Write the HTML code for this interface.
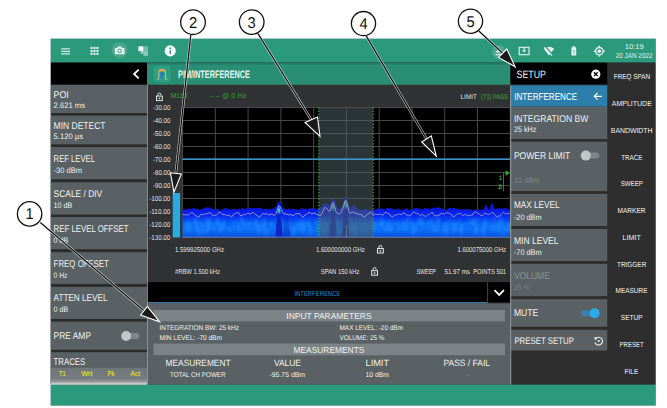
<!DOCTYPE html><html><head><meta charset="utf-8"><title>PIM/Interference</title><style>html,body{margin:0;padding:0;background:#fff}svg{display:block}</style></head><body><svg width="667" height="408" viewBox="0 0 667 408" font-family="Liberation Sans, sans-serif" text-rendering="geometricPrecision">
<defs>
<linearGradient id="gTitle" x1="0" y1="0" x2="0" y2="1"><stop offset="0" stop-color="#1f6e5b"/><stop offset="0.12" stop-color="#2a8e75"/><stop offset="1" stop-color="#2a8e75"/></linearGradient>
<linearGradient id="gTr" x1="0" y1="0" x2="0" y2="1"><stop offset="0" stop-color="#70777a"/><stop offset="0.62" stop-color="#757c7f"/><stop offset="0.8" stop-color="#8f9597"/><stop offset="1" stop-color="#e2e4e4"/></linearGradient>
<linearGradient id="gSpec" gradientUnits="userSpaceOnUse" x1="0" y1="196" x2="0" y2="238"><stop offset="0" stop-color="#0a14c8"/><stop offset="0.286" stop-color="#0818dc"/><stop offset="0.45" stop-color="#0a24ec"/><stop offset="0.55" stop-color="#0a44f4"/><stop offset="0.65" stop-color="#0c70fa"/><stop offset="0.81" stop-color="#0a6ef8"/><stop offset="0.98" stop-color="#0850e0"/></linearGradient>
<linearGradient id="gPeak" gradientUnits="userSpaceOnUse" x1="0" y1="196" x2="0" y2="238"><stop offset="0" stop-color="#1030d8"/><stop offset="0.2" stop-color="#30d0c0"/><stop offset="0.4" stop-color="#1a60e0"/><stop offset="1" stop-color="#0a20c0"/></linearGradient>
<filter id="fBlur" x="-5%" y="-20%" width="110%" height="140%"><feGaussianBlur stdDeviation="1.1 1.6"/></filter>
<filter id="fBlur2" x="-5%" y="-20%" width="110%" height="140%"><feGaussianBlur stdDeviation="0.7 0.8"/></filter>
<linearGradient id="gArch" x1="0" y1="0" x2="0" y2="1"><stop offset="0" stop-color="#2a6cc4"/><stop offset="1" stop-color="#2a96a4"/></linearGradient>
<clipPath id="cpPlot"><rect x="182.3" y="107.5" width="328.2" height="130"/></clipPath>
</defs>
<rect x="0.00" y="0.00" width="667.00" height="408.00" fill="#fff" />
<rect x="50.80" y="38.80" width="604.70" height="366.60" fill="#313233" />
<rect x="50.80" y="38.80" width="604.70" height="23.80" fill="#2a997c" />
<rect x="50.80" y="384.40" width="604.70" height="21.00" fill="#2a997c" />
<rect x="50.80" y="62.60" width="96.20" height="22.00" fill="#000" />
<rect x="50.80" y="84.60" width="96.20" height="299.80" fill="#2a2d2e" />
<rect x="50.80" y="85.00" width="96.20" height="28.00" fill="#596164" />
<text x="53.60" y="98.00" font-size="9.74" textLength="15.20" lengthAdjust="spacingAndGlyphs" fill="#f2f2f2" font-weight="normal" >POI</text>
<text x="53.60" y="108.00" font-size="7.99" textLength="31.40" lengthAdjust="spacingAndGlyphs" fill="#f2f2f2" font-weight="normal" >2.621 ms</text>
<rect x="50.80" y="115.60" width="96.20" height="28.70" fill="#596164" />
<text x="53.60" y="129.00" font-size="9.74" textLength="51.90" lengthAdjust="spacingAndGlyphs" fill="#f2f2f2" font-weight="normal" >MIN DETECT</text>
<text x="53.60" y="139.00" font-size="7.99" textLength="29.40" lengthAdjust="spacingAndGlyphs" fill="#f2f2f2" font-weight="normal" >5.120 µs</text>
<rect x="50.80" y="147.00" width="96.20" height="32.30" fill="#596164" />
<text x="53.60" y="162.00" font-size="9.74" textLength="41.40" lengthAdjust="spacingAndGlyphs" fill="#f2f2f2" font-weight="normal" >REF LEVEL</text>
<text x="53.60" y="173.00" font-size="7.99" textLength="28.40" lengthAdjust="spacingAndGlyphs" fill="#f2f2f2" font-weight="normal" >-30 dBm</text>
<rect x="50.80" y="182.30" width="96.20" height="32.20" fill="#596164" />
<text x="53.60" y="197.00" font-size="9.74" textLength="48.60" lengthAdjust="spacingAndGlyphs" fill="#f2f2f2" font-weight="normal" >SCALE / DIV</text>
<text x="53.60" y="208.00" font-size="7.99" textLength="18.70" lengthAdjust="spacingAndGlyphs" fill="#f2f2f2" font-weight="normal" >10 dB</text>
<rect x="50.80" y="217.00" width="96.20" height="32.20" fill="#596164" />
<text x="53.60" y="232.00" font-size="9.74" textLength="74.90" lengthAdjust="spacingAndGlyphs" fill="#f2f2f2" font-weight="normal" >REF LEVEL OFFSET</text>
<text x="53.60" y="243.00" font-size="7.99" textLength="14.60" lengthAdjust="spacingAndGlyphs" fill="#f2f2f2" font-weight="normal" >0 dB</text>
<rect x="50.80" y="252.20" width="96.20" height="31.70" fill="#596164" />
<text x="53.60" y="267.00" font-size="9.74" textLength="55.10" lengthAdjust="spacingAndGlyphs" fill="#f2f2f2" font-weight="normal" >FREQ OFFSET</text>
<text x="53.60" y="278.00" font-size="7.99" textLength="13.80" lengthAdjust="spacingAndGlyphs" fill="#f2f2f2" font-weight="normal" >0 Hz</text>
<rect x="50.80" y="286.90" width="96.20" height="32.00" fill="#596164" />
<text x="53.60" y="301.00" font-size="9.74" textLength="53.90" lengthAdjust="spacingAndGlyphs" fill="#f2f2f2" font-weight="normal" >ATTEN LEVEL</text>
<text x="53.60" y="312.00" font-size="7.99" textLength="14.60" lengthAdjust="spacingAndGlyphs" fill="#f2f2f2" font-weight="normal" >0 dB</text>
<rect x="50.80" y="321.60" width="96.20" height="28.20" fill="#596164" />
<text x="53.60" y="339.00" font-size="9.74" textLength="37.40" lengthAdjust="spacingAndGlyphs" fill="#f2f2f2" font-weight="normal" >PRE AMP</text>
<rect x="125.00" y="333.00" width="14.50" height="6.00" fill="#7f8689" rx="3"/>
<circle cx="126.2" cy="336" r="5" fill="#c2c6c7"/>
<rect x="50.80" y="352.20" width="96.20" height="32.20" fill="#596164" />
<rect x="50.80" y="367.80" width="96.20" height="16.90" fill="url(#gTr)" />
<text x="53.60" y="365.00" font-size="9.74" textLength="31.60" lengthAdjust="spacingAndGlyphs" fill="#f2f2f2" font-weight="normal" >TRACES</text>
<text x="59.00" y="376.00" font-size="7.12" textLength="6.80" lengthAdjust="spacingAndGlyphs" fill="#dcdc28" font-weight="normal" stroke="#dcdc28" stroke-width="0.2">T1</text>
<text x="81.20" y="376.00" font-size="7.12" textLength="11.30" lengthAdjust="spacingAndGlyphs" fill="#dcdc28" font-weight="normal" stroke="#dcdc28" stroke-width="0.2">Wrt</text>
<text x="107.50" y="376.00" font-size="7.12" textLength="7.20" lengthAdjust="spacingAndGlyphs" fill="#dcdc28" font-weight="normal" stroke="#dcdc28" stroke-width="0.2">Pk</text>
<text x="130.50" y="376.00" font-size="7.12" textLength="9.70" lengthAdjust="spacingAndGlyphs" fill="#dcdc28" font-weight="normal" stroke="#dcdc28" stroke-width="0.2">Act</text>
<path d="M138.7 69.7 L134.1 74 L138.7 78.3" fill="none" stroke="#fff" stroke-width="1.8" stroke-linejoin="miter"/>
<rect x="61.20" y="48.35" width="8.80" height="1.10" fill="#e6f4ef" />
<rect x="61.20" y="50.85" width="8.80" height="1.10" fill="#e6f4ef" />
<rect x="61.20" y="53.35" width="8.80" height="1.10" fill="#e6f4ef" />
<rect x="90.50" y="46.90" width="2.10" height="2.10" fill="#e6f4ef" />
<rect x="90.50" y="49.85" width="2.10" height="2.10" fill="#e6f4ef" />
<rect x="90.50" y="52.80" width="2.10" height="2.10" fill="#e6f4ef" />
<rect x="93.45" y="46.90" width="2.10" height="2.10" fill="#e6f4ef" />
<rect x="93.45" y="49.85" width="2.10" height="2.10" fill="#e6f4ef" />
<rect x="93.45" y="52.80" width="2.10" height="2.10" fill="#e6f4ef" />
<rect x="96.40" y="46.90" width="2.10" height="2.10" fill="#e6f4ef" />
<rect x="96.40" y="49.85" width="2.10" height="2.10" fill="#e6f4ef" />
<rect x="96.40" y="52.80" width="2.10" height="2.10" fill="#e6f4ef" />
<circle cx="119.6" cy="50.2" r="8" fill="#ffffff" fill-opacity="0.14"/>
<path d="M114.8 48 h2.3 l0.9 -1.4 h3.3 l0.9 1.4 h2.3 v6.3 h-9.7 z" fill="#e6f4ef"/>
<circle cx="119.65" cy="50.9" r="1.8" fill="none" stroke="#2a997c" stroke-width="0.9"/>
<rect x="138.40" y="46.30" width="5.00" height="4.90" fill="#f6fcfa" />
<rect x="143.40" y="46.30" width="4.60" height="4.90" fill="#ffffff" fill-opacity="0.35"/>
<rect x="143.40" y="51.20" width="4.60" height="4.70" fill="#ffffff" fill-opacity="0.45"/>
<rect x="140.80" y="51.20" width="2.60" height="2.50" fill="#ffffff" fill-opacity="0.6"/>
<circle cx="170.2" cy="50.9" r="5.6" fill="#fafdfc"/>
<rect x="169.50" y="50.20" width="1.50" height="3.70" fill="#2a997c" />
<circle cx="170.25" cy="48.2" r="0.9" fill="#2a997c"/>
<circle cx="499" cy="52" r="7" fill="#ffffff" fill-opacity="0.15"/>
<path d="M495.5 52.5 l3.5 -4 l3.5 4 z M495.5 54 h7 v1.3 h-7z" fill="#e6f4ef"/>
<rect x="519.2" y="47.3" width="9.8" height="7.4" fill="none" stroke="#e6f4ef" stroke-width="1.1"/>
<path d="M523.6 47.3 h1.2 v3 h1.4 l-2 2.2 l-2 -2.2 h1.4 z" fill="#e6f4ef"/>
<path d="M543.8 48.8 q5.2 -4 10.4 0 l-5.2 6.8 z" fill="#e6f4ef"/>
<path d="M545.4 46.4 l7.4 8.4" stroke="#2a997c" stroke-width="1.4"/><path d="M544.4 47.0 l7.6 8.6" stroke="#e6f4ef" stroke-width="1.1"/>
<rect x="571.40" y="47.20" width="4.80" height="8.20" fill="#e6f4ef" rx="0.6"/>
<rect x="572.70" y="46.20" width="2.20" height="1.20" fill="#e6f4ef" />
<text x="572.60" y="54.00" font-size="5.23" textLength="2.40" lengthAdjust="spacingAndGlyphs" fill="#2a997c" font-weight="bold" >?</text>
<circle cx="599.3" cy="51.2" r="3.7" fill="none" stroke="#e6f4ef" stroke-width="1.4"/><circle cx="599.3" cy="51.2" r="1.8" fill="#e6f4ef"/>
<path d="M599.3 45.6 v1.6 M599.3 55.2 v1.6 M593.7 51.2 h1.6 M603.3 51.2 h1.6" stroke="#e6f4ef" stroke-width="1.2"/>
<text x="624.80" y="49.00" font-size="7.12" textLength="19.00" lengthAdjust="spacingAndGlyphs" fill="#e3f2ed" font-weight="normal" >10:19</text>
<text x="615.80" y="58.00" font-size="7.12" textLength="36.70" lengthAdjust="spacingAndGlyphs" fill="#e3f2ed" font-weight="normal" >20 JAN 2022</text>
<rect x="147.00" y="62.60" width="363.50" height="22.10" fill="url(#gTitle)" />
<rect x="153.60" y="65.80" width="17.00" height="16.20" fill="#2ba083" rx="2.6"/>
<path d="M158.1 72.6 Q158.1 68.8 162.1 68.8 Q166.1 68.8 166.1 72.6 L164.6 72.6 Q164.6 71.2 162.1 71.2 Q159.6 71.2 159.6 72.6 Z" fill="#e3a24c"/>
<path d="M158.8 72.4 V79 L156.9 79.5 M165.4 72.4 V79 L167.3 79.5" fill="none" stroke="#cdbd92" stroke-width="1"/>
<path d="M160.2 79.2 V73.4 Q160.2 72 162.1 72 Q164 72 164 73.4 V79.2 Z" fill="url(#gArch)"/>
<text x="178.00" y="78.00" font-size="10.90" textLength="72.00" lengthAdjust="spacingAndGlyphs" fill="#e6f6f1" font-weight="bold" >PIM/INTERFERENCE</text>
<rect x="182.30" y="107.50" width="328.20" height="130.00" fill="#000" />
<rect x="156.50" y="96.08" width="5.80" height="4.52" fill="none" stroke="#e8e8e8" stroke-width="1"/>
<path d="M157.90 96.08 v-1.4 a1.50 1.70 0 0 1 3.00 0 v0.5" fill="none" stroke="#e8e8e8" stroke-width="1"/>
<rect x="158.60" y="97.74" width="1.6" height="1.4" fill="#e8e8e8"/>
<text x="170.80" y="98.00" font-size="7.12" textLength="17.20" lengthAdjust="spacingAndGlyphs" fill="#35a035" font-weight="normal" >M1Δ2</text>
<text x="209.80" y="98.00" font-size="7.12" textLength="36.50" lengthAdjust="spacingAndGlyphs" fill="#35a035" font-weight="normal" >– – @ 0 Hz</text>
<text x="460.60" y="99.00" font-size="6.83" textLength="16.20" lengthAdjust="spacingAndGlyphs" fill="#e0e0e0" font-weight="normal" >LIMIT</text>
<text x="481.00" y="99.00" font-size="6.83" textLength="26.80" lengthAdjust="spacingAndGlyphs" fill="#40b038" font-weight="normal" >(T1) PASS</text>
<text x="153.00" y="110.00" font-size="7.12" textLength="17.30" lengthAdjust="spacingAndGlyphs" fill="#e4e4e4" font-weight="normal" >-30.00</text>
<text x="153.00" y="123.00" font-size="7.12" textLength="17.30" lengthAdjust="spacingAndGlyphs" fill="#e4e4e4" font-weight="normal" >-40.00</text>
<text x="153.00" y="136.00" font-size="7.12" textLength="17.30" lengthAdjust="spacingAndGlyphs" fill="#e4e4e4" font-weight="normal" >-50.00</text>
<text x="153.00" y="149.00" font-size="7.12" textLength="17.30" lengthAdjust="spacingAndGlyphs" fill="#e4e4e4" font-weight="normal" >-60.00</text>
<text x="153.00" y="162.00" font-size="7.12" textLength="17.30" lengthAdjust="spacingAndGlyphs" fill="#e4e4e4" font-weight="normal" >-70.00</text>
<text x="153.00" y="175.00" font-size="7.12" textLength="17.30" lengthAdjust="spacingAndGlyphs" fill="#e4e4e4" font-weight="normal" >-80.00</text>
<text x="153.00" y="188.00" font-size="7.12" textLength="17.30" lengthAdjust="spacingAndGlyphs" fill="#e4e4e4" font-weight="normal" >-90.00</text>
<text x="149.20" y="201.00" font-size="7.12" textLength="21.10" lengthAdjust="spacingAndGlyphs" fill="#e4e4e4" font-weight="normal" >-100.00</text>
<text x="149.20" y="214.00" font-size="7.12" textLength="21.10" lengthAdjust="spacingAndGlyphs" fill="#e4e4e4" font-weight="normal" >-110.00</text>
<text x="149.20" y="227.00" font-size="7.12" textLength="21.10" lengthAdjust="spacingAndGlyphs" fill="#e4e4e4" font-weight="normal" >-120.00</text>
<text x="149.20" y="240.00" font-size="7.12" textLength="21.10" lengthAdjust="spacingAndGlyphs" fill="#e4e4e4" font-weight="normal" >-130.00</text>
<path d="M182.55 107.5 V237.5 M215.32 107.5 V237.5 M248.09 107.5 V237.5 M280.86 107.5 V237.5 M313.63 107.5 V237.5 M346.40 107.5 V237.5 M379.17 107.5 V237.5 M411.94 107.5 V237.5 M444.71 107.5 V237.5 M477.48 107.5 V237.5 M510.25 107.5 V237.5 M182.3 107.50 H510.5 M182.3 120.50 H510.5 M182.3 133.50 H510.5 M182.3 146.50 H510.5 M182.3 159.50 H510.5 M182.3 172.50 H510.5 M182.3 185.50 H510.5 M182.3 198.50 H510.5 M182.3 211.50 H510.5 M182.3 224.50 H510.5 M182.3 237.50 H510.5" stroke="#545454" stroke-width="0.85" fill="none"/>
<g clip-path="url(#cpPlot)">
<path d="M182.3 237.5 L182.3 208.8 L183.3 208.9 L184.3 209.7 L185.3 209.4 L186.3 209.3 L187.3 209.4 L188.3 208.6 L189.3 208.7 L190.3 209.0 L191.3 209.5 L192.3 208.6 L193.3 208.3 L194.3 207.7 L195.3 208.6 L196.3 209.1 L197.3 208.1 L198.3 209.3 L199.3 210.1 L200.3 210.0 L201.3 209.9 L202.3 209.0 L203.2 208.0 L204.2 208.3 L205.2 207.7 L206.2 207.4 L207.2 207.3 L208.2 206.9 L209.2 207.4 L210.2 207.7 L211.2 208.7 L212.2 208.8 L213.2 209.1 L214.2 209.0 L215.2 209.3 L216.2 209.1 L217.2 208.6 L218.2 209.7 L219.2 210.4 L220.2 210.6 L221.2 210.5 L222.2 209.7 L223.2 209.0 L224.2 208.6 L225.2 207.8 L226.2 208.6 L227.2 208.5 L228.2 209.3 L229.2 209.0 L230.2 209.8 L231.2 210.2 L232.2 208.9 L233.2 208.3 L234.2 209.3 L235.2 209.1 L236.2 210.0 L237.2 209.5 L238.2 208.5 L239.2 208.9 L240.2 209.4 L241.2 208.8 L242.2 208.1 L243.2 208.0 L244.1 209.1 L245.1 209.5 L246.1 208.6 L247.1 208.2 L248.1 207.7 L249.1 207.2 L250.1 208.2 L251.1 207.8 L252.1 208.2 L253.1 208.3 L254.1 207.9 L255.1 208.6 L256.1 208.0 L257.1 208.5 L258.1 207.9 L259.1 208.0 L260.1 207.7 L261.1 207.6 L262.1 208.9 L263.1 209.5 L264.1 208.9 L265.1 209.7 L266.1 208.9 L267.1 208.7 L268.1 209.4 L269.1 209.5 L270.1 208.6 L271.1 209.6 L272.1 208.9 L273.1 208.3 L274.1 208.8 L275.1 207.8 L276.1 206.2 L277.1 203.7 L278.1 201.4 L279.1 201.4 L280.1 202.0 L281.1 204.4 L282.1 206.2 L283.1 207.5 L284.1 209.1 L285.0 209.1 L286.0 209.2 L287.0 209.8 L288.0 209.0 L289.0 208.3 L290.0 209.2 L291.0 209.8 L292.0 209.0 L293.0 208.4 L294.0 209.0 L295.0 209.8 L296.0 209.0 L297.0 209.8 L298.0 210.3 L299.0 210.1 L300.0 209.6 L301.0 208.7 L302.0 207.8 L303.0 209.0 L304.0 208.5 L305.0 209.0 L306.0 208.5 L307.0 209.2 L308.0 209.3 L309.0 208.8 L310.0 208.2 L311.0 208.8 L312.0 208.0 L313.0 207.8 L314.0 208.2 L315.0 209.1 L316.0 209.2 L317.0 208.7 L318.0 209.5 L319.0 208.6 L320.0 207.5 L321.0 206.8 L322.0 206.2 L323.0 204.5 L324.0 203.3 L325.0 203.0 L325.9 203.5 L326.9 203.6 L327.9 204.2 L328.9 205.0 L329.9 204.4 L330.9 202.0 L331.9 199.7 L332.9 198.5 L333.9 198.5 L334.9 200.2 L335.9 202.5 L336.9 206.0 L337.9 207.9 L338.9 209.4 L339.9 208.1 L340.9 207.6 L341.9 205.8 L342.9 203.5 L343.9 199.7 L344.9 198.0 L345.9 196.2 L346.9 197.9 L347.9 201.4 L348.9 205.0 L349.9 207.0 L350.9 207.4 L351.9 206.7 L352.9 205.8 L353.9 204.3 L354.9 204.9 L355.9 206.7 L356.9 208.5 L357.9 209.0 L358.9 209.9 L359.9 210.5 L360.9 210.2 L361.9 210.1 L362.9 209.5 L363.9 209.5 L364.9 209.6 L365.9 208.6 L366.9 208.9 L367.8 209.9 L368.8 210.3 L369.8 210.4 L370.8 209.7 L371.8 209.9 L372.8 209.8 L373.8 209.4 L374.8 209.9 L375.8 208.9 L376.8 209.3 L377.8 208.3 L378.8 208.7 L379.8 208.7 L380.8 208.2 L381.8 208.8 L382.8 208.8 L383.8 209.1 L384.8 209.8 L385.8 209.1 L386.8 208.1 L387.8 208.0 L388.8 208.6 L389.8 208.1 L390.8 207.7 L391.8 208.8 L392.8 209.1 L393.8 209.0 L394.8 209.7 L395.8 209.1 L396.8 209.4 L397.8 208.7 L398.8 208.6 L399.8 209.3 L400.8 210.0 L401.8 210.4 L402.8 209.7 L403.8 209.7 L404.8 209.1 L405.8 208.4 L406.8 208.5 L407.8 209.3 L408.7 209.8 L409.7 210.0 L410.7 210.5 L411.7 209.6 L412.7 208.8 L413.7 208.7 L414.7 208.4 L415.7 208.0 L416.7 208.1 L417.7 208.5 L418.7 208.6 L419.7 208.4 L420.7 209.2 L421.7 210.0 L422.7 209.6 L423.7 208.6 L424.7 207.8 L425.7 208.8 L426.7 208.0 L427.7 208.6 L428.7 208.8 L429.7 208.5 L430.7 209.2 L431.7 208.2 L432.7 207.7 L433.7 207.9 L434.7 207.3 L435.7 208.4 L436.7 208.0 L437.7 207.6 L438.7 207.1 L439.7 207.8 L440.7 208.0 L441.7 208.5 L442.7 208.9 L443.7 209.5 L444.7 210.2 L445.7 210.2 L446.7 209.3 L447.7 209.1 L448.7 208.4 L449.6 207.6 L450.6 207.9 L451.6 208.6 L452.6 208.1 L453.6 207.9 L454.6 207.9 L455.6 208.5 L456.6 208.7 L457.6 209.0 L458.6 209.4 L459.6 209.1 L460.6 209.6 L461.6 210.2 L462.6 209.0 L463.6 209.8 L464.6 210.0 L465.6 209.0 L466.6 208.9 L467.6 209.1 L468.6 209.8 L469.6 209.3 L470.6 209.3 L471.6 209.9 L472.6 210.2 L473.6 210.7 L474.6 210.1 L475.6 210.1 L476.6 209.2 L477.6 209.5 L478.6 210.0 L479.6 209.9 L480.6 210.1 L481.6 209.2 L482.6 209.7 L483.6 209.4 L484.6 207.4 L485.6 204.6 L486.6 205.7 L487.6 207.7 L488.6 209.7 L489.6 209.2 L490.5 205.7 L491.5 202.2 L492.5 203.5 L493.5 206.8 L494.5 209.0 L495.5 209.2 L496.5 208.2 L497.5 209.0 L498.5 208.1 L499.5 208.9 L500.5 208.3 L501.5 208.2 L502.5 208.9 L503.5 208.2 L504.5 207.7 L505.5 208.1 L506.5 208.7 L507.5 209.4 L508.5 209.6 L509.5 210.3 L510.5 209.9 L510.5 237.5 Z" fill="url(#gSpec)"/>
<g filter="url(#fBlur)"><path d="M493.8 217.9V223.3 M355.2 220.2V228.6 M392.0 222.8V231.8 M366.1 220.4V226.7 M459.7 226.9V232.2 M461.5 227.7V234.8 M370.4 219.2V226.4 M347.4 223.7V227.8 M500.5 222.7V229.1 M445.2 223.2V230.1 M409.1 217.7V225.0 M318.1 227.5V236.5 M270.7 222.2V227.0 M324.6 226.0V235.4 M338.7 220.5V225.6 M385.1 227.2V232.0 M438.1 217.3V222.4 M256.9 224.6V230.5 M298.9 223.8V228.4 M422.2 218.4V225.4 M264.5 219.2V226.4 M325.6 221.1V227.6 M356.0 218.8V224.0 M389.5 224.0V231.2 M461.7 223.7V232.9 M258.7 225.1V234.0 M478.6 220.5V226.4 M485.2 219.4V229.4 M473.6 218.5V223.9 M420.8 219.9V224.4 M455.4 221.6V230.4 M223.7 221.4V229.5 M188.1 219.2V227.3 M481.4 227.7V232.3 M348.3 225.3V232.4 M407.3 219.1V223.5 M217.1 217.4V224.7 M351.3 223.3V228.1 M242.9 219.2V228.3 M507.3 227.2V231.8 M202.6 227.5V234.2 M433.3 220.6V227.4 M351.4 221.7V229.3 M186.6 224.7V233.8 M241.8 222.0V230.4 M315.3 219.1V224.1 M350.5 217.2V226.5 M445.4 224.8V233.9 M388.9 221.4V229.0 M347.8 227.8V236.5 M267.1 227.0V235.5 M437.6 226.0V232.4 M476.5 226.7V234.8 M434.1 225.4V231.9 M419.5 217.8V223.8 M336.2 217.1V223.3 M391.9 223.9V229.3 M492.3 224.3V230.4 M398.8 223.3V230.5 M310.2 228.0V235.9 M412.5 225.4V235.3 M189.8 223.8V232.2 M266.5 221.4V225.7 M246.4 221.1V225.7 M264.6 227.0V234.3 M349.0 227.6V235.0 M508.9 224.0V232.9 M207.3 223.6V232.1 M197.1 227.2V232.2 M337.1 218.9V225.8 M382.9 217.6V227.3 M320.4 222.8V230.4 M302.3 220.1V228.1 M366.3 220.1V228.4 M279.5 217.2V222.6 M196.3 218.7V227.3 M310.3 226.9V235.4 M198.8 227.9V236.5 M206.4 227.0V233.5 M339.1 227.7V233.2 M354.1 227.3V235.6 M336.0 227.8V236.5 M380.4 218.3V226.0 M331.9 219.2V223.6 M355.6 218.4V225.0 M401.5 222.0V227.6 M373.4 221.6V230.3 M356.5 228.0V236.5 M423.3 219.6V224.3 M475.3 225.6V233.4 M300.2 220.0V228.1 M367.7 223.5V231.3 M429.5 219.1V224.6 M503.8 227.1V236.3 M195.3 217.7V223.3 M321.8 223.9V228.5 M360.1 217.8V222.3 M404.3 223.1V230.8 M304.8 222.3V227.5 M295.1 225.2V234.2 M206.7 218.3V227.2 M387.0 225.5V230.7 M321.6 219.8V228.7 M303.4 224.2V234.1 M289.1 223.0V231.5 M484.5 221.7V227.9 M214.1 226.6V231.1 M209.5 223.2V230.1 M407.2 220.3V228.9 M207.3 219.3V227.3 M209.1 220.3V228.7 M410.1 220.1V225.0 M299.7 225.0V231.2 M220.8 224.8V232.2 M483.8 227.3V236.5 M326.0 225.8V231.7 M286.5 221.4V231.0 M475.9 219.7V225.9 M302.3 221.0V227.4 M309.5 219.1V226.5 M443.9 222.9V232.0 M367.0 218.9V227.5 M471.4 220.1V224.2 M351.5 223.0V230.4 M499.5 224.2V233.0 M203.3 223.0V231.7 M209.9 217.9V226.3 M477.4 217.9V225.7 M229.5 225.2V233.1 M262.9 219.4V228.0 M353.5 225.4V231.8 M293.2 227.7V235.7 M344.3 222.9V231.2 M414.7 227.1V233.5 M453.5 224.3V233.5 M446.8 226.2V235.5 M496.6 224.0V231.2 M415.4 225.8V232.4 M320.3 218.6V227.1 M507.5 221.1V226.1 M249.4 221.7V227.4 M500.6 217.7V223.5 M220.0 224.1V232.8 M241.2 217.7V224.4 M374.0 227.0V231.2 M218.0 219.0V224.3 M259.6 224.9V232.5 M255.8 219.0V224.7 M238.9 225.3V231.2 M362.2 226.0V232.9" stroke="#38a4ff" stroke-width="2.4" stroke-opacity="0.32"/><path d="M267.8 221.0V228.6 M294.6 217.9V225.7 M340.7 215.0V218.2 M493.3 220.2V225.1 M355.5 217.6V222.0 M507.3 218.9V223.1 M185.9 217.3V222.1 M443.8 219.4V225.4 M233.9 214.4V219.0 M267.4 220.8V226.4 M391.4 221.9V226.3 M357.7 214.4V221.2 M182.7 220.4V227.6 M452.1 213.7V218.1 M417.5 213.9V219.3 M336.1 221.6V227.5 M463.7 215.7V222.7 M319.1 221.3V224.7 M453.5 214.9V220.6 M354.8 214.4V221.6 M284.5 215.8V219.2 M282.6 217.2V223.8 M300.4 219.2V222.7 M311.7 217.2V225.0 M454.6 218.9V221.9 M306.1 219.4V223.6 M367.4 217.1V220.2 M507.8 220.2V224.2 M384.5 215.6V220.5 M359.5 215.7V220.4 M311.0 219.0V223.3 M247.9 219.6V224.2 M492.5 218.1V224.7 M291.2 220.4V223.9 M228.5 213.8V220.2 M414.8 214.6V219.6 M457.0 218.3V221.8 M256.7 214.4V218.0 M315.8 213.7V221.3 M322.4 217.6V223.8 M434.0 220.4V225.3 M291.1 216.7V219.8 M313.8 219.3V227.2 M441.5 218.9V225.0 M188.4 216.0V220.7 M395.9 214.0V218.8 M349.5 220.1V227.2 M383.0 214.4V221.3 M478.7 217.9V222.7 M346.5 214.3V220.8 M506.2 217.6V224.2 M456.5 214.8V222.5 M388.1 214.8V218.2 M262.6 218.2V224.7 M290.3 221.4V226.2 M334.3 214.1V222.0 M226.8 221.1V226.9 M366.3 218.0V222.4 M480.7 221.9V229.0 M379.7 214.1V221.2 M277.0 221.1V225.3 M370.6 220.5V224.4 M362.1 213.7V216.8 M241.4 221.9V229.6 M398.4 215.8V222.1 M424.4 216.4V222.4 M446.1 213.1V217.1 M335.9 214.3V219.2 M369.2 214.6V220.2 M268.8 218.1V222.8 M392.9 213.3V219.7 M229.8 221.6V227.6 M336.5 216.7V222.8 M408.5 219.8V226.6 M341.7 222.0V229.1 M462.9 216.7V221.9 M368.1 221.1V226.8 M354.6 216.9V224.4 M287.6 213.5V220.1 M477.7 219.6V225.6 M429.1 215.7V221.7 M205.2 214.1V219.4 M347.3 216.6V219.8 M410.4 217.7V221.9 M282.8 216.6V220.7 M204.8 221.2V229.0 M400.8 220.8V225.9 M446.6 215.0V221.7 M368.3 221.1V224.6 M442.4 214.1V219.8" stroke="#0a24e0" stroke-width="2.2" stroke-opacity="0.35"/></g>
<g filter="url(#fBlur2)">
<path d="M275.4 237.5 Q276.6 216 279.0 209.5 Q281.4 216 282.6 237.5 Z" fill="#0a1eb8" fill-opacity="0.9"/>
<path d="M283.0 237.5 Q284.2 216 286.6 217.0 Q289.0 216 290.2 237.5 Z" fill="#0a1eb8" fill-opacity="0.45"/>
<path d="M329.4 237.5 Q330.6 216 333.0 205.0 Q335.4 216 336.6 237.5 Z" fill="#0a1eb8" fill-opacity="0.75"/>
<path d="M342.1 237.5 Q343.3 216 345.7 203.5 Q348.1 216 349.3 237.5 Z" fill="#0a1eb8" fill-opacity="0.85"/>
<path d="M277.3 212.5 Q279.0 201.5 280.7 212.5 Z" fill="#3ce0c4" fill-opacity="0.95"/>
<path d="M331.3 209.5 Q333.0 198.5 334.7 209.5 Z" fill="#3ce0c4" fill-opacity="0.95"/>
<path d="M344.0 207.0 Q345.7 196.0 347.4 207.0 Z" fill="#3ce0c4" fill-opacity="0.95"/>
</g>
<rect x="318.80" y="107.50" width="54.40" height="130.00" fill="#4e5f62" fill-opacity="0.55"/>
<path d="M182.3 214.0 L183.3 214.6 L184.3 214.7 L185.3 215.1 L186.3 214.6 L187.3 214.7 L188.3 215.5 L189.3 214.5 L190.3 213.4 L191.3 212.7 L192.3 212.4 L193.3 213.8 L194.3 214.7 L195.3 214.8 L196.3 216.0 L197.3 216.6 L198.3 216.8 L199.3 216.5 L200.3 214.7 L201.3 214.2 L202.3 214.7 L203.2 214.4 L204.2 214.4 L205.2 213.7 L206.2 213.3 L207.2 214.0 L208.2 213.4 L209.2 212.7 L210.2 213.0 L211.2 213.5 L212.2 215.1 L213.2 216.0 L214.2 215.3 L215.2 215.3 L216.2 215.0 L217.2 214.2 L218.2 213.6 L219.2 212.1 L220.2 212.2 L221.2 213.6 L222.2 214.1 L223.2 214.6 L224.2 214.6 L225.2 214.5 L226.2 215.6 L227.2 215.5 L228.2 214.9 L229.2 215.5 L230.2 215.8 L231.2 216.5 L232.2 216.5 L233.2 214.7 L234.2 213.9 L235.2 213.5 L236.2 212.9 L237.2 213.0 L238.2 212.7 L239.2 213.4 L240.2 215.3 L241.2 215.7 L242.2 215.5 L243.2 215.0 L244.1 214.2 L245.1 214.6 L246.1 214.3 L247.1 213.3 L248.1 213.5 L249.1 213.7 L250.1 214.0 L251.1 214.0 L252.1 212.5 L253.1 212.4 L254.1 213.4 L255.1 214.0 L256.1 215.0 L257.1 215.5 L258.1 216.0 L259.1 217.3 L260.1 216.8 L261.1 215.4 L262.1 214.4 L263.1 213.5 L264.1 213.9 L265.1 214.2 L266.1 213.5 L267.1 214.1 L268.1 214.7 L269.1 214.8 L270.1 215.0 L271.1 213.9 L272.1 213.9 L273.1 215.1 L274.1 215.3 L275.1 215.0 L276.1 213.2 L277.1 210.1 L278.1 207.1 L279.1 205.5 L280.1 206.5 L281.1 209.1 L282.1 211.1 L283.1 213.0 L284.1 214.3 L285.0 213.7 L286.0 213.8 L287.0 214.3 L288.0 214.7 L289.0 215.2 L290.0 214.5 L291.0 214.3 L292.0 215.5 L293.0 215.4 L294.0 215.0 L295.0 214.4 L296.0 213.5 L297.0 213.9 L298.0 213.9 L299.0 213.3 L300.0 214.1 L301.0 215.2 L302.0 216.4 L303.0 217.1 L304.0 215.8 L305.0 215.0 L306.0 214.8 L307.0 213.8 L308.0 213.3 L309.0 212.6 L310.0 212.4 L311.0 213.7 L312.0 213.9 L313.0 213.4 L314.0 213.3 L315.0 213.1 L316.0 214.0 L317.0 214.8 L318.0 214.5 L319.0 215.2 L320.0 215.6 L321.0 214.9 L322.0 213.5 L323.0 210.7 L324.0 208.6 L325.0 207.7 L325.9 207.6 L326.9 208.7 L327.9 210.3 L328.9 211.2 L329.9 211.0 L330.9 208.1 L331.9 204.3 L332.9 202.6 L333.9 203.9 L334.9 207.5 L335.9 211.4 L336.9 213.1 L337.9 213.9 L338.9 214.3 L339.9 213.5 L340.9 212.7 L341.9 210.8 L342.9 208.2 L343.9 204.8 L344.9 201.1 L345.9 200.2 L346.9 202.8 L347.9 207.2 L348.9 211.5 L349.9 213.5 L350.9 212.9 L351.9 212.4 L352.9 212.1 L353.9 212.5 L354.9 213.3 L355.9 213.1 L356.9 213.4 L357.9 214.3 L358.9 214.3 L359.9 214.6 L360.9 214.5 L361.9 214.7 L362.9 216.5 L363.9 217.1 L364.9 216.6 L365.9 216.0 L366.9 214.7 L367.8 214.3 L368.8 213.8 L369.8 212.3 L370.8 212.4 L371.8 213.2 L372.8 214.0 L373.8 215.0 L374.8 214.3 L375.8 214.0 L376.8 214.7 L377.8 214.5 L378.8 214.5 L379.8 214.3 L380.8 214.1 L381.8 215.1 L382.8 215.1 L383.8 213.7 L384.8 213.0 L385.8 212.3 L386.8 212.7 L387.8 213.6 L388.8 213.5 L389.8 214.5 L390.8 216.1 L391.8 216.7 L392.8 217.1 L393.8 215.9 L394.8 214.8 L395.8 215.2 L396.8 214.8 L397.8 214.4 L398.8 214.3 L399.8 213.8 L400.8 214.5 L401.8 214.6 L402.8 213.3 L403.8 213.1 L404.8 213.3 L405.8 214.2 L406.8 215.5 L407.8 215.2 L408.7 215.3 L409.7 215.8 L410.7 215.1 L411.7 214.3 L412.7 212.8 L413.7 211.6 L414.7 212.6 L415.7 213.2 L416.7 213.3 L417.7 213.9 L418.7 214.1 L419.7 215.0 L420.7 215.5 L421.7 214.5 L422.7 214.7 L423.7 215.3 L424.7 215.9 L425.7 216.7 L426.7 215.7 L427.7 214.7 L428.7 214.7 L429.7 213.9 L430.7 213.2 L431.7 212.8 L432.7 212.7 L433.7 214.6 L434.7 215.8 L435.7 215.7 L436.7 215.8 L437.7 215.3 L438.7 215.1 L439.7 215.1 L440.7 213.6 L441.7 213.2 L442.7 213.7 L443.7 213.8 L444.7 214.1 L445.7 213.1 L446.7 212.2 L447.7 212.9 L448.7 213.2 L449.6 213.5 L450.6 214.2 L451.6 214.7 L452.6 216.4 L453.6 217.1 L454.6 215.9 L455.6 215.1 L456.6 214.2 L457.6 213.8 L458.6 214.1 L459.6 213.3 L460.6 213.4 L461.6 214.7 L462.6 215.1 L463.6 215.4 L464.6 214.8 L465.6 214.1 L466.6 215.1 L467.6 215.6 L468.6 215.4 L469.6 215.6 L470.6 215.2 L471.6 215.3 L472.6 215.0 L473.6 213.0 L474.6 211.9 L475.6 211.8 L476.6 212.2 L477.6 213.5 L478.6 213.6 L479.6 214.0 L480.6 215.4 L481.6 215.6 L482.6 215.3 L483.6 214.5 L484.6 213.2 L485.6 213.4 L486.6 214.1 L487.6 214.3 L488.6 214.4 L489.6 213.9 L490.5 213.4 L491.5 213.1 L492.5 212.5 L493.5 213.0 L494.5 214.5 L495.5 215.6 L496.5 216.9 L497.5 216.7 L498.5 215.9 L499.5 216.2 L500.5 215.4 L501.5 214.1 L502.5 213.3 L503.5 212.4 L504.5 213.3 L505.5 214.2 L506.5 213.5 L507.5 213.5 L508.5 213.4 L509.5 213.6 L510.5 214.4" fill="none" stroke="#b0aedc" stroke-width="0.8" stroke-linejoin="round"/>
<rect x="182.30" y="236.80" width="328.20" height="1.00" fill="#8f9fc0" fill-opacity="0.9"/>
<rect x="346.00" y="225.50" width="0.90" height="12.00" fill="#7a8488" fill-opacity="0.8"/>
</g>
<path d="M318.8 107.5 V237.5 M373.2 107.5 V237.5" stroke="#36b040" stroke-width="1.1" stroke-dasharray="1.2 2.05" fill="none"/>
<rect x="182.30" y="158.40" width="328.20" height="1.50" fill="#3c9cd2" />
<rect x="172.70" y="193.00" width="7.40" height="44.50" fill="#29abe2" />
<path d="M505.6 170.3 L509.6 173 L505.6 175.7 Z" fill="#35b035"/>
<rect x="503.00" y="172.70" width="0.80" height="18.50" fill="#35a035" />
<text x="498.90" y="180.00" font-size="6.69" textLength="2.80" lengthAdjust="spacingAndGlyphs" fill="#3cb03c" font-weight="bold" >1</text>
<text x="498.30" y="189.00" font-size="6.69" textLength="3.70" lengthAdjust="spacingAndGlyphs" fill="#3cb03c" font-weight="bold" >2</text>
<text x="174.90" y="252.00" font-size="7.12" textLength="49.10" lengthAdjust="spacingAndGlyphs" fill="#e4e4e4" font-weight="normal" >1.599925000 GHz</text>
<text x="315.90" y="252.00" font-size="7.12" textLength="48.90" lengthAdjust="spacingAndGlyphs" fill="#e4e4e4" font-weight="normal" >1.600000000 GHz</text>
<rect x="377.50" y="248.48" width="5.80" height="4.52" fill="none" stroke="#e8e8e8" stroke-width="1"/>
<path d="M378.90 248.48 v-1.4 a1.50 1.70 0 0 1 3.00 0 v0.5" fill="none" stroke="#e8e8e8" stroke-width="1"/>
<rect x="379.60" y="250.14" width="1.6" height="1.4" fill="#e8e8e8"/>
<text x="457.40" y="252.00" font-size="7.12" textLength="48.60" lengthAdjust="spacingAndGlyphs" fill="#e4e4e4" font-weight="normal" >1.600075000 GHz</text>
<text x="174.90" y="274.00" font-size="7.12" textLength="45.10" lengthAdjust="spacingAndGlyphs" fill="#e4e4e4" font-weight="normal" >#RBW 1.500 kHz</text>
<text x="320.80" y="274.00" font-size="7.12" textLength="38.60" lengthAdjust="spacingAndGlyphs" fill="#e4e4e4" font-weight="normal" >SPAN 150 kHz</text>
<rect x="371.70" y="270.68" width="5.80" height="4.52" fill="none" stroke="#e8e8e8" stroke-width="1"/>
<path d="M373.10 270.68 v-1.4 a1.50 1.70 0 0 1 3.00 0 v0.5" fill="none" stroke="#e8e8e8" stroke-width="1"/>
<rect x="373.80" y="272.34" width="1.6" height="1.4" fill="#e8e8e8"/>
<text x="416.40" y="274.00" font-size="7.12" textLength="19.50" lengthAdjust="spacingAndGlyphs" fill="#e4e4e4" font-weight="normal" >SWEEP</text>
<text x="444.50" y="274.00" font-size="7.12" textLength="25.40" lengthAdjust="spacingAndGlyphs" fill="#e4e4e4" font-weight="normal" >51.97 ms</text>
<text x="473.20" y="274.00" font-size="7.12" textLength="32.90" lengthAdjust="spacingAndGlyphs" fill="#e4e4e4" font-weight="normal" >POINTS 501</text>
<rect x="147.00" y="282.20" width="363.50" height="20.30" fill="#000" />
<rect x="147.00" y="302.30" width="340.50" height="1.10" fill="#4f9fd0" />
<rect x="487.20" y="282.20" width="0.90" height="21.20" fill="#4a4f51" />
<text x="294.40" y="296.00" font-size="6.98" textLength="45.90" lengthAdjust="spacingAndGlyphs" fill="#2f93c8" font-weight="normal" >INTERFERENCE</text>
<path d="M494.5 290.2 L499.2 295 L503.9 290.2" fill="none" stroke="#fff" stroke-width="1.8"/>
<rect x="147.00" y="303.40" width="363.50" height="81.00" fill="#596164" />
<rect x="153.50" y="310.00" width="351.50" height="11.40" fill="#7b8386" />
<rect x="153.50" y="343.60" width="351.50" height="11.70" fill="#7b8386" />
<text x="286.30" y="319.00" font-size="8.72" textLength="85.30" lengthAdjust="spacingAndGlyphs" fill="#eef0f0" font-weight="normal" >INPUT PARAMETERS</text>
<text x="293.50" y="353.00" font-size="8.72" textLength="70.90" lengthAdjust="spacingAndGlyphs" fill="#eef0f0" font-weight="normal" >MEASUREMENTS</text>
<text x="159.50" y="330.00" font-size="6.98" textLength="79.50" lengthAdjust="spacingAndGlyphs" fill="#f2f2f2" font-weight="normal" >INTEGRATION BW: 25 kHz</text>
<text x="159.50" y="340.00" font-size="6.98" textLength="62.40" lengthAdjust="spacingAndGlyphs" fill="#f2f2f2" font-weight="normal" >MIN LEVEL: -70 dBm</text>
<text x="339.50" y="330.00" font-size="6.98" textLength="63.50" lengthAdjust="spacingAndGlyphs" fill="#f2f2f2" font-weight="normal" >MAX LEVEL: -20 dBm</text>
<text x="339.50" y="340.00" font-size="6.98" textLength="45.00" lengthAdjust="spacingAndGlyphs" fill="#f2f2f2" font-weight="normal" >VOLUME: 25 %</text>
<text x="165.50" y="366.00" font-size="9.16" textLength="65.10" lengthAdjust="spacingAndGlyphs" fill="#f2f2f2" font-weight="normal" >MEASUREMENT</text>
<text x="274.00" y="366.00" font-size="9.16" textLength="27.00" lengthAdjust="spacingAndGlyphs" fill="#f2f2f2" font-weight="normal" >VALUE</text>
<text x="365.60" y="366.00" font-size="9.16" textLength="23.40" lengthAdjust="spacingAndGlyphs" fill="#f2f2f2" font-weight="normal" >LIMIT</text>
<text x="443.50" y="366.00" font-size="9.16" textLength="46.50" lengthAdjust="spacingAndGlyphs" fill="#f2f2f2" font-weight="normal" >PASS / FAIL</text>
<text x="170.00" y="377.00" font-size="6.98" textLength="55.50" lengthAdjust="spacingAndGlyphs" fill="#f2f2f2" font-weight="normal" >TOTAL CH POWER</text>
<text x="269.50" y="377.00" font-size="6.98" textLength="35.50" lengthAdjust="spacingAndGlyphs" fill="#f2f2f2" font-weight="normal" >-95.75 dBm</text>
<text x="365.60" y="377.00" font-size="6.98" textLength="23.40" lengthAdjust="spacingAndGlyphs" fill="#f2f2f2" font-weight="normal" >10 dBm</text>
<text x="465.00" y="377.00" font-size="6.98" textLength="4.50" lengthAdjust="spacingAndGlyphs" fill="#8d9497" font-weight="normal" >--</text>
<rect x="147.00" y="84.70" width="0.80" height="299.70" fill="#9aa0a2" />
<rect x="510.50" y="62.60" width="97.00" height="22.00" fill="#000" />
<rect x="510.50" y="84.60" width="97.00" height="299.80" fill="#2e2e2e" />
<text x="516.60" y="78.00" font-size="10.61" textLength="29.20" lengthAdjust="spacingAndGlyphs" fill="#f2f2f2" font-weight="normal" >SETUP</text>
<circle cx="595.8" cy="74.2" r="4.6" fill="#fff"/><path d="M593.9 72.3 l3.8 3.8 M597.7 72.3 l-3.8 3.8" stroke="#000" stroke-width="1.3"/>
<rect x="510.50" y="85.30" width="97.00" height="21.40" fill="#2c7fab" />
<text x="514.30" y="100.00" font-size="10.03" textLength="62.80" lengthAdjust="spacingAndGlyphs" fill="#fff" font-weight="normal" >INTERFERENCE</text>
<path d="M602 96.3 H594.4 M597.6 93 L594.3 96.3 L597.6 99.6" fill="none" stroke="#fff" stroke-width="1.2"/>
<rect x="510.50" y="106.70" width="97.00" height="32.30" fill="#596164" />
<rect x="510.50" y="141.70" width="97.00" height="49.40" fill="#596164" />
<rect x="510.50" y="193.90" width="97.00" height="32.10" fill="#596164" />
<rect x="510.50" y="229.00" width="97.00" height="32.00" fill="#596164" />
<rect x="510.50" y="263.90" width="97.00" height="32.20" fill="#596164" />
<rect x="510.50" y="299.20" width="97.00" height="27.50" fill="#596164" />
<rect x="510.50" y="329.80" width="97.00" height="20.70" fill="#596164" />
<text x="513.90" y="122.00" font-size="9.74" textLength="74.50" lengthAdjust="spacingAndGlyphs" fill="#f2f2f2" font-weight="normal" >INTEGRATION BW</text>
<text x="513.90" y="132.00" font-size="7.99" textLength="22.40" lengthAdjust="spacingAndGlyphs" fill="#f2f2f2" font-weight="normal" >25 kHz</text>
<text x="513.90" y="159.00" font-size="9.74" textLength="56.40" lengthAdjust="spacingAndGlyphs" fill="#f2f2f2" font-weight="normal" >POWER LIMIT</text>
<rect x="585.00" y="152.60" width="14.40" height="6.00" fill="#7f8689" rx="3"/>
<circle cx="585.8" cy="155.6" r="5" fill="#c2c6c7"/>
<text x="513.90" y="183.00" font-size="7.85" textLength="25.30" lengthAdjust="spacingAndGlyphs" fill="#7b8387" font-weight="normal" >10 dBm</text>
<text x="513.90" y="208.00" font-size="9.74" textLength="45.70" lengthAdjust="spacingAndGlyphs" fill="#f2f2f2" font-weight="normal" >MAX LEVEL</text>
<text x="513.90" y="220.00" font-size="7.99" textLength="27.70" lengthAdjust="spacingAndGlyphs" fill="#f2f2f2" font-weight="normal" >-20 dBm</text>
<text x="513.90" y="244.00" font-size="9.74" textLength="44.70" lengthAdjust="spacingAndGlyphs" fill="#f2f2f2" font-weight="normal" >MIN LEVEL</text>
<text x="513.90" y="255.00" font-size="7.99" textLength="27.70" lengthAdjust="spacingAndGlyphs" fill="#f2f2f2" font-weight="normal" >-70 dBm</text>
<text x="513.90" y="279.00" font-size="9.74" textLength="36.00" lengthAdjust="spacingAndGlyphs" fill="#8b9397" font-weight="normal" >VOLUME</text>
<text x="513.90" y="290.00" font-size="7.85" textLength="15.70" lengthAdjust="spacingAndGlyphs" fill="#7b8387" font-weight="normal" >25 %</text>
<text x="513.90" y="316.00" font-size="9.74" textLength="24.20" lengthAdjust="spacingAndGlyphs" fill="#f2f2f2" font-weight="normal" >MUTE</text>
<rect x="581.00" y="310.30" width="14.00" height="6.00" fill="#3b80aa" rx="3"/>
<circle cx="594.6" cy="313.3" r="5" fill="#2aabe6"/>
<text x="514.40" y="344.00" font-size="9.45" textLength="59.50" lengthAdjust="spacingAndGlyphs" fill="#f2f2f2" font-weight="normal" >PRESET SETUP</text>
<path d="M595.6 338.6 A3.9 3.9 0 1 1 594.9 342.3" fill="none" stroke="#f0f0f0" stroke-width="1.1"/><path d="M593.6 337.4 l2.2 2.9 l1.5 -2.8 z" fill="#f0f0f0"/><circle cx="598.7" cy="340.9" r="1" fill="#f0f0f0"/>
<rect x="510.20" y="85.40" width="1.00" height="299.00" fill="#9aa0a2" />
<rect x="607.50" y="62.60" width="48.00" height="321.80" fill="#2e2e2e" />
<text x="613.80" y="79.00" font-size="7.41" textLength="36.20" lengthAdjust="spacingAndGlyphs" fill="#f4f4f4" font-weight="normal" >FREQ SPAN</text>
<text x="611.80" y="106.00" font-size="7.41" textLength="40.00" lengthAdjust="spacingAndGlyphs" fill="#f4f4f4" font-weight="normal" >AMPLITUDE</text>
<text x="610.80" y="133.00" font-size="7.41" textLength="41.70" lengthAdjust="spacingAndGlyphs" fill="#f4f4f4" font-weight="normal" >BANDWIDTH</text>
<text x="621.30" y="160.00" font-size="7.41" textLength="21.00" lengthAdjust="spacingAndGlyphs" fill="#f4f4f4" font-weight="normal" >TRACE</text>
<text x="620.80" y="186.00" font-size="7.41" textLength="22.00" lengthAdjust="spacingAndGlyphs" fill="#f4f4f4" font-weight="normal" >SWEEP</text>
<text x="617.50" y="213.00" font-size="7.41" textLength="28.00" lengthAdjust="spacingAndGlyphs" fill="#f4f4f4" font-weight="normal" >MARKER</text>
<text x="622.50" y="240.00" font-size="7.41" textLength="18.30" lengthAdjust="spacingAndGlyphs" fill="#f4f4f4" font-weight="normal" >LIMIT</text>
<text x="617.00" y="267.00" font-size="7.41" textLength="29.30" lengthAdjust="spacingAndGlyphs" fill="#f4f4f4" font-weight="normal" >TRIGGER</text>
<text x="615.50" y="293.00" font-size="7.41" textLength="32.00" lengthAdjust="spacingAndGlyphs" fill="#f4f4f4" font-weight="normal" >MEASURE</text>
<text x="620.80" y="320.00" font-size="7.41" textLength="21.70" lengthAdjust="spacingAndGlyphs" fill="#f4f4f4" font-weight="normal" >SETUP</text>
<text x="619.50" y="347.00" font-size="7.41" textLength="24.30" lengthAdjust="spacingAndGlyphs" fill="#f4f4f4" font-weight="normal" >PRESET</text>
<text x="624.50" y="374.00" font-size="7.41" textLength="13.80" lengthAdjust="spacingAndGlyphs" fill="#f4f4f4" font-weight="normal" >FILE</text>
<path d="M40.3 222.5 L144.00 310.70" stroke="#fff" stroke-opacity="0.75" stroke-width="2.5" fill="none"/>
<path d="M40.3 222.5 L144.00 310.70" stroke="#111" stroke-width="1.3" fill="none"/>
<path d="M140.6 315 L147.4 306.4 L159.6 321.8 Z" fill="#1a1a1a" stroke="#fff" stroke-width="1.1" stroke-linejoin="miter"/>
<circle cx="29.6" cy="213.9" r="12.2" fill="#fff" stroke="#111" stroke-width="1.3"/>
<text x="25.50" y="219.00" font-size="15.70" textLength="8.20" lengthAdjust="spacingAndGlyphs" fill="#111" font-weight="normal" >1</text>
<path d="M190.8 34.8 L175.85 173.30" stroke="#fff" stroke-opacity="0.75" stroke-width="2.5" fill="none"/>
<path d="M190.8 34.8 L175.85 173.30" stroke="#111" stroke-width="1.3" fill="none"/>
<path d="M170.4 172.7 L181.3 173.9 L173.9 192.3 Z" fill="#1a1a1a" stroke="#fff" stroke-width="1.1" stroke-linejoin="miter"/>
<circle cx="193.0" cy="22.2" r="12.3" fill="#fff" stroke="#111" stroke-width="1.3"/>
<text x="188.90" y="28.00" font-size="15.70" textLength="8.20" lengthAdjust="spacingAndGlyphs" fill="#111" font-weight="normal" >2</text>
<path d="M258 33.7 L311.25 119.75" stroke="#fff" stroke-opacity="0.75" stroke-width="2.5" fill="none"/>
<path d="M258 33.7 L311.25 119.75" stroke="#111" stroke-width="1.3" fill="none"/>
<path d="M305 122.5 L317.5 117 L320 136.3 Z" fill="#1a1a1a" stroke="#fff" stroke-width="1.1" stroke-linejoin="miter"/>
<circle cx="251.7" cy="22.1" r="12.3" fill="#fff" stroke="#111" stroke-width="1.3"/>
<text x="247.60" y="28.00" font-size="15.70" textLength="8.20" lengthAdjust="spacingAndGlyphs" fill="#111" font-weight="normal" >3</text>
<path d="M366.2 35.9 L426.55 138.90" stroke="#fff" stroke-opacity="0.75" stroke-width="2.5" fill="none"/>
<path d="M366.2 35.9 L426.55 138.90" stroke="#111" stroke-width="1.3" fill="none"/>
<path d="M421.8 142 L431.3 135.8 L436.3 156.3 Z" fill="#1a1a1a" stroke="#fff" stroke-width="1.1" stroke-linejoin="miter"/>
<circle cx="363.5" cy="23.6" r="12.1" fill="#fff" stroke="#111" stroke-width="1.3"/>
<text x="359.40" y="29.00" font-size="15.70" textLength="8.20" lengthAdjust="spacingAndGlyphs" fill="#111" font-weight="normal" >4</text>
<path d="M478.8 31 L502.70 53.20" stroke="#fff" stroke-opacity="0.75" stroke-width="2.5" fill="none"/>
<path d="M478.8 31 L502.70 53.20" stroke="#111" stroke-width="1.3" fill="none"/>
<path d="M498.6 57.4 L506.8 49 L515.2 66.8 Z" fill="#1a1a1a" stroke="#fff" stroke-width="1.1" stroke-linejoin="miter"/>
<circle cx="470.5" cy="21.2" r="12.1" fill="#fff" stroke="#111" stroke-width="1.3"/>
<text x="466.40" y="27.00" font-size="15.70" textLength="8.20" lengthAdjust="spacingAndGlyphs" fill="#111" font-weight="normal" >5</text>
</svg></body></html>
